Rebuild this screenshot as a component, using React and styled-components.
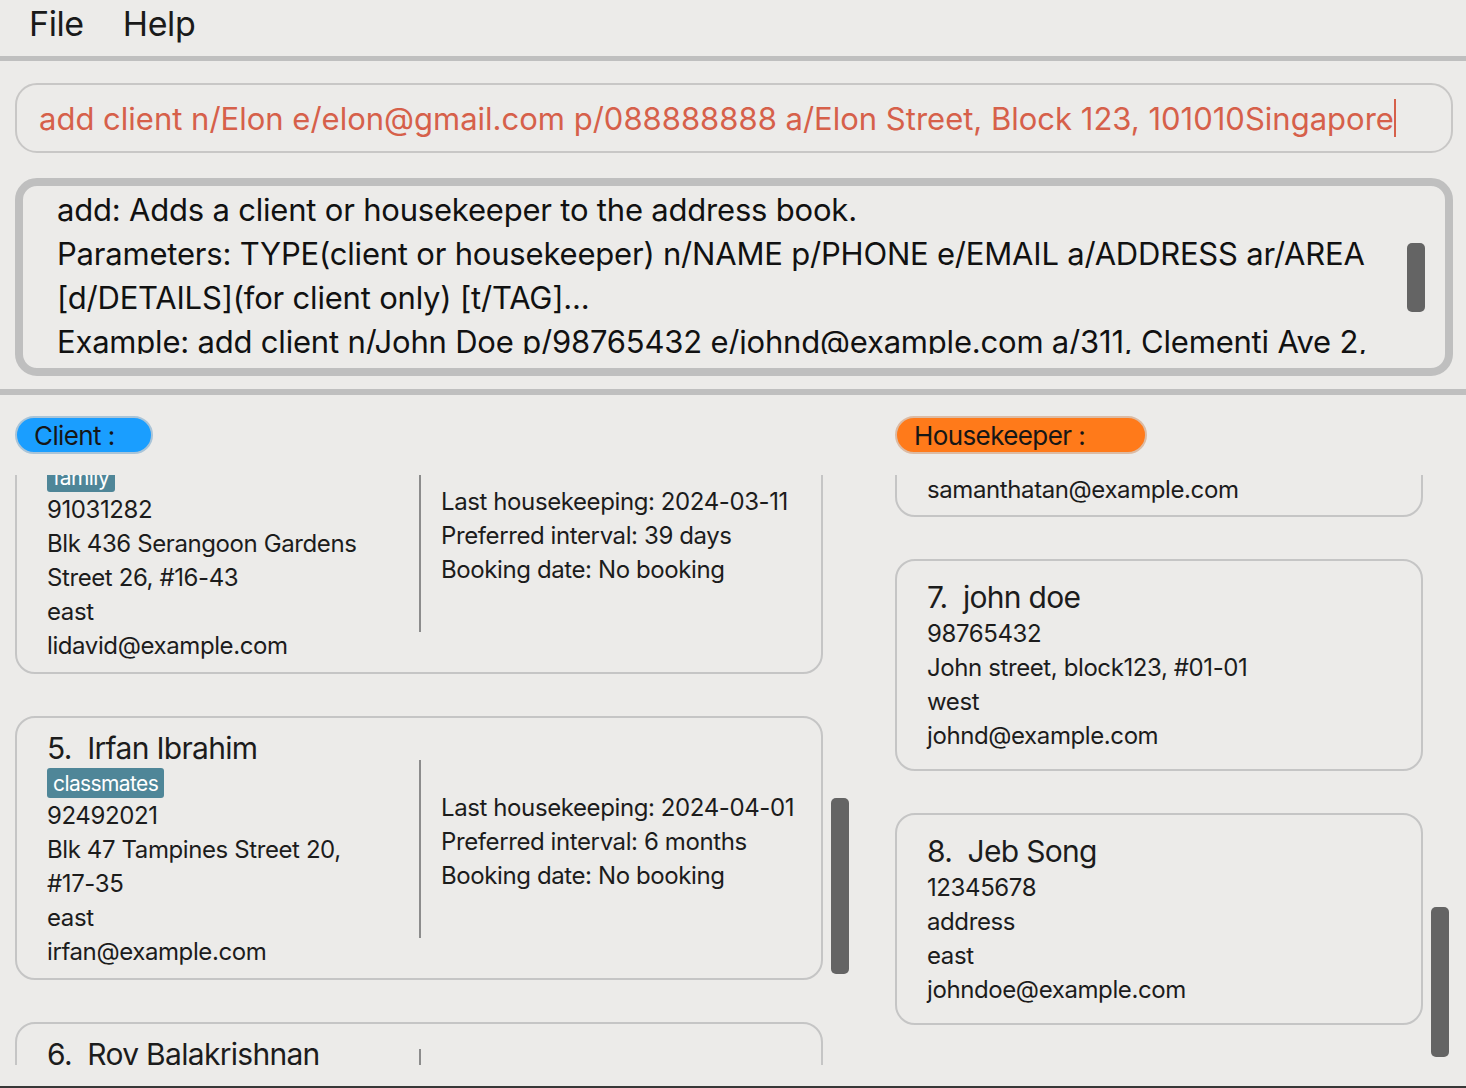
import React from 'react'
import styled, { createGlobalStyle } from 'styled-components'

const GlobalStyle = createGlobalStyle`
  html, body {
    margin: 0;
    padding: 0;
    background: #ecebe9;
  }
  body {
    font-family: Inter, "Noto Sans", "Liberation Sans", sans-serif;
    color: #1c1c1c;
  }
  * { box-sizing: border-box; }
`

const clients = [
  {
    index: 4,
    name: 'David Li',
    tags: ['family'],
    phone: '91031282',
    address: 'Blk 436 Serangoon Gardens Street 26, #16-43',
    area: 'east',
    email: 'lidavid@example.com',
    last: '2024-03-11',
    interval: '39 days',
    booking: 'No booking',
    inset: 42,
  },
  {
    index: 5,
    name: 'Irfan Ibrahim',
    tags: ['classmates'],
    phone: '92492021',
    address: 'Blk 47 Tampines Street 20, #17-35',
    area: 'east',
    email: 'irfan@example.com',
    last: '2024-04-01',
    interval: '6 months',
    booking: 'No booking',
    inset: 42,
  },
  {
    index: 6,
    name: 'Roy Balakrishnan',
    tags: ['colleagues'],
    phone: '92624417',
    address: 'Blk 45 Aljunied Street 85, #11-31',
    area: 'north',
    email: 'royb@example.com',
    last: '2024-02-20',
    interval: '2 weeks',
    booking: 'No booking',
    inset: 25,
  },
]

const housekeepers = [
  {
    index: 3,
    name: 'Samantha Tan',
    phone: '93210283',
    address: 'Blk 30 Geylang Street 29, #06-40',
    area: 'central',
    email: 'samanthatan@example.com',
    tail: 8,
  },
  {
    index: 7,
    name: 'john doe',
    phone: '98765432',
    address: 'John street, block123, #01-01',
    area: 'west',
    email: 'johnd@example.com',
    tail: 16,
  },
  {
    index: 8,
    name: 'Jeb Song',
    phone: '12345678',
    address: 'address',
    area: 'east',
    email: 'johndoe@example.com',
    tail: 16,
  },
]

export default function App() {
  return (
    <Window>
      <GlobalStyle />
      <MenuBar>
        <MenuItem>File</MenuItem>
        <MenuItem>Help</MenuItem>
      </MenuBar>

      <CommandBox>
        <CommandText>
          add client n/Elon e/elon@gmail.com p/088888888 a/Elon Street, Block 123, 101010Singapore
        </CommandText>
        <Caret />
      </CommandBox>

      <ResultBox>
        <ResultText>
          <p>add: Adds a client or housekeeper to the address book.</p>
          <p>
            Parameters: TYPE(client or housekeeper) n/NAME p/PHONE e/EMAIL a/ADDRESS ar/AREA
            [d/DETAILS](for client only) [t/TAG]...
          </p>
          <p>Example: add client n/John Doe p/98765432 e/johnd@example.com a/311, Clementi Ave 2,</p>
        </ResultText>
        <ScrollTrack $width={18} $gap={20}>
          <Thumb style={{ marginTop: 57, height: 69 }} />
        </ScrollTrack>
      </ResultBox>

      <Divider />

      <Lists>
        <Panel $width={834}>
          <Pill $bg="#1a9eff" $border="#a9c4d8" $width={138}>Client :</Pill>
          <ListArea>
            <Viewport>
              <ListContent style={{ marginTop: -65 }}>
                {clients.map((c) => (
                  <ClientCard key={c.index}>
                    <Details>
                      <Name>
                        {c.index}.&nbsp;&nbsp;{c.name}
                      </Name>
                      <Tags>
                        {c.tags.map((t) => (
                          <Tag key={t}>{t}</Tag>
                        ))}
                      </Tags>
                      <Line>{c.phone}</Line>
                      <Line>{c.address}</Line>
                      <Line>{c.area}</Line>
                      <Line>{c.email}</Line>
                    </Details>
                    <Rule $inset={c.inset} />
                    <Schedule>
                      <Line>Last housekeeping: {c.last}</Line>
                      <Line>Preferred interval: {c.interval}</Line>
                      <Line>Booking date: {c.booking}</Line>
                    </Schedule>
                  </ClientCard>
                ))}
              </ListContent>
            </Viewport>
            <ScrollTrack $width={18}>
              <Thumb style={{ marginTop: 323, height: 176 }} />
            </ScrollTrack>
          </ListArea>
        </Panel>

        <Panel $width={554}>
          <Pill $bg="#ff7a1a" $border="#dcbba4" $width={252}>Housekeeper :</Pill>
          <ListArea>
            <Viewport>
              <ListContent style={{ marginTop: -170 }}>
                {housekeepers.map((h) => (
                  <KeeperCard key={h.index} $tail={h.tail}>
                    <Name>
                      {h.index}.&nbsp;&nbsp;{h.name}
                    </Name>
                    <Line>{h.phone}</Line>
                    <Line>{h.address}</Line>
                    <Line>{h.area}</Line>
                    <Line>{h.email}</Line>
                  </KeeperCard>
                ))}
              </ListContent>
            </Viewport>
            <ScrollTrack $width={18}>
              <Thumb style={{ marginTop: 432, height: 150 }} />
            </ScrollTrack>
          </ListArea>
        </Panel>
      </Lists>
    </Window>
  )
}

const Window = styled.div`
  height: 1088px;
  display: flex;
  flex-direction: column;
  overflow: hidden;
  border-bottom: 2px solid #383838;
`

const MenuBar = styled.div`
  height: 61px;
  flex-shrink: 0;
  display: flex;
  align-items: center;
  gap: 39px;
  padding: 0 0 9px 29px;
  border-bottom: 5px solid #bfbfbf;
`

const MenuItem = styled.span`
  font-size: 34px;
  letter-spacing: -0.4px;
  color: #1a1a1a;
`

const CommandBox = styled.div`
  flex-shrink: 0;
  height: 70px;
  margin: 22px 13px 0 15px;
  padding-left: 22px;
  display: flex;
  align-items: center;
  border: 2px solid #c8c7c6;
  border-radius: 22px;
`

const CommandText = styled.span`
  font-size: 31px;
  letter-spacing: 0;
  color: #d6604a;
  white-space: nowrap;
`

const Caret = styled.span`
  width: 2px;
  height: 38px;
  background: #d6604a;
`

const ResultBox = styled.div`
  flex-shrink: 0;
  height: 198px;
  margin: 25px 13px 0 15px;
  display: flex;
  border: 8px solid #bfbfbf;
  border-radius: 22px;
  overflow: hidden;
`

const ResultText = styled.div`
  flex: 1;
  overflow: hidden;
  padding: 2px 24px 0 34px;
  margin-bottom: 14px;
  font-size: 31px;
  line-height: 44px;
  letter-spacing: -0.2px;
  color: #111;

  p {
    margin: 0;
  }
`

const ScrollTrack = styled.div`
  width: ${(p) => p.$width}px;
  margin-right: ${(p) => p.$gap || 0}px;
  flex-shrink: 0;
  display: flex;
  flex-direction: column;
`

const Thumb = styled.div`
  width: 100%;
  background: #646464;
  border-radius: 5px;
`

const Divider = styled.div`
  flex-shrink: 0;
  height: 6px;
  margin-top: 13px;
  background: #bfbfbf;
`

const Lists = styled.div`
  flex: 1;
  display: flex;
  gap: 46px;
  padding: 21px 17px 0 15px;
`

const Panel = styled.div`
  width: ${(p) => p.$width}px;
  display: flex;
  flex-direction: column;
`

const Pill = styled.div`
  width: ${(p) => p.$width}px;
  height: 38px;
  display: flex;
  align-items: center;
  padding-left: 17px;
  background: ${(p) => p.$bg};
  border: 2px solid ${(p) => p.$border};
  border-radius: 20px;
  font-size: 26px;
  letter-spacing: -0.6px;
  color: #161616;
  margin-bottom: 21px;
`

const ListArea = styled.div`
  height: 590px;
  display: flex;
  gap: 8px;
`

const Viewport = styled.div`
  flex: 1;
  overflow: hidden;
`

const ListContent = styled.div`
  display: flex;
  flex-direction: column;
  gap: 42px;
`

const CardBase = styled.div`
  border: 2px solid #c5c5c5;
  border-radius: 20px;
  flex-shrink: 0;
`

const ClientCard = styled(CardBase)`
  height: 264px;
  display: flex;
`

const KeeperCard = styled(CardBase)`
  height: 212px;
  padding: 0 0 ${(p) => p.$tail}px 30px;
  display: flex;
  flex-direction: column;
  justify-content: flex-end;
`

const Details = styled.div`
  width: 402px;
  padding: 10px 0 0 30px;
  flex-shrink: 0;

  & > div:not(:first-child) {
    max-width: 340px;
  }
`

const Name = styled.div`
  font-size: 30px;
  line-height: 40px;
  letter-spacing: -0.7px;
  color: #1c1c1c;
`

const Tags = styled.div`
  display: flex;
  gap: 6px;
  margin-bottom: 1px;
`

const Tag = styled.span`
  height: 30px;
  padding: 0 6px;
  display: flex;
  align-items: center;
  background: #4f8698;
  color: #fff;
  font-size: 21px;
  letter-spacing: -0.6px;
  border-radius: 3px;
`

const Line = styled.div`
  font-size: 24px;
  line-height: 34px;
  letter-spacing: -0.4px;
  color: #1c1c1c;
`

const Rule = styled.div`
  width: 2px;
  flex-shrink: 0;
  margin: ${(p) => p.$inset}px 0 40px;
  background: #8c8c8c;
`

const Schedule = styled.div`
  padding: 0 0 12px 20px;
  display: flex;
  flex-direction: column;
  justify-content: center;
`
